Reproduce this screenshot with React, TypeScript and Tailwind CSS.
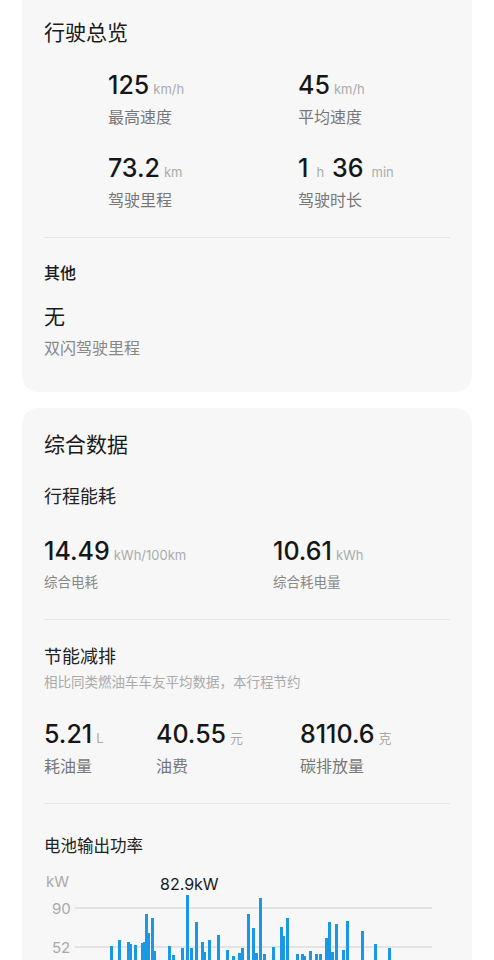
import React from "react";

const font = {
  fontFamily: '"Inter", "Noto Sans CJK SC", sans-serif',
};

// bar x (page px) and top (page px)
const bars: [number, number][] = [
  [111, 947], [119, 941], [128, 943], [130, 945], [135, 946], [142, 944], [144, 943],
  [146, 915], [148, 934], [152, 919], [154, 952], [169, 947], [173, 956], [182, 949],
  [187, 896], [191, 949], [196, 923], [202, 943], [204, 953], [209, 941], [218, 936],
  [227, 951], [233, 957], [239, 954], [242, 949], [248, 915], [253, 929], [256, 954],
  [260, 899], [264, 955], [273, 948], [281, 928], [283, 937], [287, 919], [297, 955],
  [302, 955], [304, 957], [310, 952], [316, 955], [320, 955], [326, 939], [329, 923],
  [332, 953], [336, 925], [343, 951], [347, 922], [362, 932], [375, 945], [389, 949],
];

function Stat({ value, unit, label }: { value: React.ReactNode; unit?: string; label: string }) {
  return (
    <div className="flex flex-col">
      <div className="flex items-baseline h-8">
        <span className="text-[25px] font-medium text-[#161616] leading-8">{value}</span>
        {unit && <span className="ml-1 text-[13px] text-[#ababab]">{unit}</span>}
      </div>
      <span className="mt-[5px] text-[16px] leading-[22px] text-[#777]">{label}</span>
    </div>
  );
}

export default function App() {
  return (
    <div className="w-[494px] bg-white min-h-screen" style={font}>
      <div className="mx-[22px] bg-[#f7f7f7] rounded-b-2xl px-[22px] pt-[19px] pb-[33px]">
        <p className="text-[21px] leading-7 text-[#1a1a1a]">行驶总览</p>
        <div className="grid grid-cols-[190px_1fr] pl-[64px] mt-[22px] gap-y-[24px]">
          <Stat value="125" unit="km/h" label="最高速度" />
          <Stat value="45" unit="km/h" label="平均速度" />
          <Stat value="73.2" unit="km" label="驾驶里程" />
          <div className="flex flex-col">
            <div className="flex items-baseline h-8">
              <span className="text-[25px] font-medium text-[#161616] leading-8">1</span>
              <span className="ml-2 text-[13px] text-[#ababab]">h</span>
              <span className="ml-2 text-[25px] font-medium text-[#161616] leading-8">36</span>
              <span className="ml-2 text-[13px] text-[#ababab]">min</span>
            </div>
            <span className="mt-[5px] text-[16px] leading-[22px] text-[#777]">驾驶时长</span>
          </div>
        </div>
        <div className="mt-[26px] h-px bg-[#e6e6e6]" />
        <p className="mt-[25px] text-[16px] leading-5 font-medium text-[#1a1a1a]">其他</p>
        <p className="mt-[20px] text-[21px] leading-7 text-[#1a1a1a]">无</p>
        <p className="mt-[6px] text-[16px] leading-[22px] text-[#888]">双闪驾驶里程</p>
      </div>

      <div className="mx-[22px] mt-4 bg-[#f7f7f7] rounded-t-2xl px-[22px] pt-[23px] pb-10">
        <p className="text-[21px] leading-7 text-[#1a1a1a]">综合数据</p>
        <p className="mt-[26px] text-[18px] leading-6 text-[#222]">行程能耗</p>
        <div className="grid grid-cols-[229px_1fr] mt-[26px]">
          <div className="flex flex-col">
            <div className="flex items-baseline h-8">
              <span className="text-[25px] font-medium text-[#161616] leading-8">14.49</span>
              <span className="ml-1 text-[13px] text-[#ababab]">kWh/100km</span>
            </div>
            <span className="mt-[5px] text-[13.5px] leading-5 text-[#888]">综合电耗</span>
          </div>
          <div className="flex flex-col">
            <div className="flex items-baseline h-8">
              <span className="text-[25px] font-medium text-[#161616] leading-8">10.61</span>
              <span className="ml-1 text-[13px] text-[#ababab]">kWh</span>
            </div>
            <span className="mt-[5px] text-[13.5px] leading-5 text-[#888]">综合耗电量</span>
          </div>
        </div>
        <div className="mt-[27px] h-px bg-[#e6e6e6]" />
        <p className="mt-[25px] text-[18px] leading-6 text-[#222]">节能减排</p>
        <p className="mt-[4px] text-[13.5px] leading-[18px] text-[#aaa]">相比同类燃油车车友平均数据，本行程节约</p>
        <div className="grid grid-cols-[112px_144px_1fr] mt-[27px]">
          <Stat value="5.21" unit="L" label="耗油量" />
          <Stat value="40.55" unit="元" label="油费" />
          <Stat value="8110.6" unit="克" label="碳排放量" />
        </div>
        <div className="mt-[26px] h-px bg-[#e6e6e6]" />
        <p className="mt-[31px] text-[16.5px] leading-[22px] text-[#222]">电池输出功率</p>
        <svg width="406" height="140" className="mt-[12px] block" viewBox="0 0 406 140">
          <text x="2" y="18" fontSize="15" fill="#aaa" fontFamily="Inter, sans-serif">kW</text>
          <text x="116" y="21" fontSize="16" fill="#1a1a1a" fontFamily="Inter, sans-serif">82.9kW</text>
          <text x="8" y="45" fontSize="15" fill="#aaa" fontFamily="Inter, sans-serif">90</text>
          <text x="8" y="84" fontSize="15" fill="#aaa" fontFamily="Inter, sans-serif">52</text>
          <line x1="31" y1="39" x2="388" y2="39" stroke="#cfcfcf" strokeWidth="1" />
          <line x1="31" y1="78" x2="388" y2="78" stroke="#cfcfcf" strokeWidth="1" />
          {bars.map(([x, top], i) => (
            <rect key={i} x={x - 44 - 1} y={top - 870} width="3" height={140 - (top - 870)} fill="#1a98e6" />
          ))}
        </svg>
      </div>
    </div>
  );
}
